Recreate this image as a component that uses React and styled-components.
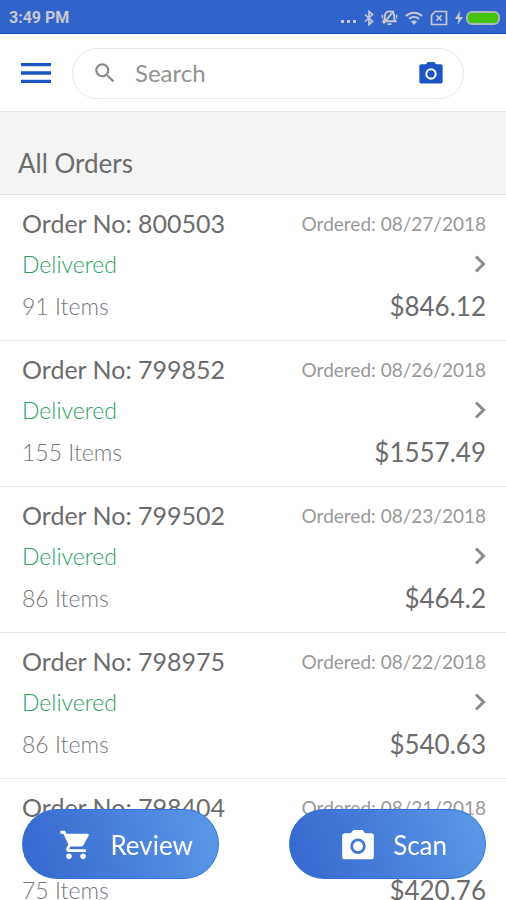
import React from 'react';
import styled, { createGlobalStyle } from 'styled-components';

const GlobalStyle = createGlobalStyle`
  *, *::before, *::after { box-sizing: border-box; }
  body { margin: 0; background: #fff; font-family: Lato, "Open Sans", sans-serif; }
  button, input { font: inherit; }
`;

const Screen = styled.div`
  display: flex;
  flex-direction: column;
  height: 100vh;
  overflow: hidden;
`;

const StatusBar = styled.div`
  flex: none;
  display: flex;
  align-items: center;
  justify-content: space-between;
  height: 34px;
  padding: 2px 6px 0 9px;
  background: #3064cb;
  border-bottom: 1px solid #0f4bb8;
  color: #c9c8d2;
`;

const Clock = styled.time`
  font: 700 16px/20px Roboto, sans-serif;
`;

const StatusIcons = styled.div`
  display: flex;
  align-items: center;
  gap: 7px;
`;

const Power = styled.div`
  display: flex;
  align-items: center;
  gap: 3px;
`;

const Header = styled.header`
  flex: none;
  display: flex;
  align-items: center;
  gap: 16px;
  height: 78px;
  padding: 1px 42px 0 16px;
  border-bottom: 1px solid #e4e4e4;
`;

const IconButton = styled.button`
  flex: none;
  display: flex;
  padding: 0;
  border: 0;
  background: none;
  color: #1d56c4;
  cursor: pointer;
`;

const SearchBox = styled.label`
  flex: 1;
  min-width: 0;
  display: flex;
  align-items: center;
  height: 51px;
  padding: 0 18px 0 19px;
  border: 1px solid #e8e8e8;
  border-radius: 26px;
  color: #8a8a8a;
`;

const SearchInput = styled.input`
  flex: 1;
  min-width: 0;
  margin-left: 17px;
  padding: 0;
  border: 0;
  outline: 0;
  background: none;
  font-size: 24px;
  line-height: 28px;
  color: #555;
  &::placeholder { color: #929292; opacity: 1; }
`;

const PageTitle = styled.h1`
  flex: none;
  margin: 0;
  padding: 35px 18px 15px;
  background: #f4f4f4;
  border-bottom: 1px solid #e4e4e4;
  font-size: 26px;
  font-weight: 400;
  line-height: 32px;
  color: #6c6c6c;
`;

const OrderList = styled.ul`
  flex: 1;
  min-height: 0;
  margin: 0;
  padding: 0 0 100px;
  list-style: none;
  overflow-y: auto;
  scrollbar-width: none;
`;

const OrderItem = styled.li`
  border-bottom: 1px solid #e8e8e8;
`;

const OrderLink = styled.a`
  display: grid;
  grid-template-columns: 1fr auto;
  grid-template-rows: 40px 41px 43px;
  align-items: center;
  padding: 8px 20px 13px 22px;
  color: #6c6c6c;
  text-decoration: none;
`;

const OrderNumber = styled.span`
  font-size: 25px;
`;

const OrderDate = styled.span`
  justify-self: end;
  font-size: 19px;
  color: #999;
`;

const Status = styled.span`
  font-size: 23px;
  font-weight: 300;
  color: #2b9f62;
`;

const ItemCount = styled.span`
  font-size: 23px;
  font-weight: 300;
  color: #777;
`;

const Total = styled.span`
  justify-self: end;
  font-size: 26px;
`;

const Chevron = styled.svg`
  justify-self: end;
  width: 12px;
  height: 18px;
  fill: none;
  stroke: #8c8c8c;
  stroke-width: 3;
`;

const Actions = styled.div`
  position: fixed;
  inset: auto 0 0;
  display: flex;
  justify-content: space-between;
  padding: 0 20px 21px 22px;
  pointer-events: none;
`;

const ActionButton = styled.button`
  display: flex;
  align-items: center;
  justify-content: flex-end;
  gap: ${({ $gap }) => $gap}px;
  width: 197px;
  height: 70px;
  padding: 2px ${({ $inset }) => $inset}px 0 0;
  border: 1px solid #2f72d8;
  border-radius: 36px;
  background: linear-gradient(70deg, #386bd0 10%, #5a97e6 95%);
  color: #fff;
  font-size: 26px;
  cursor: pointer;
  pointer-events: auto;
`;

const orders = [
  { number: '800503', date: '08/27/2018', items: 91, total: '$846.12' },
  { number: '799852', date: '08/26/2018', items: 155, total: '$1557.49' },
  { number: '799502', date: '08/23/2018', items: 86, total: '$464.2' },
  { number: '798975', date: '08/22/2018', items: 86, total: '$540.63' },
  { number: '798404', date: '08/21/2018', items: 75, total: '$420.76' },
];

const Camera = ({ size }) => (
  <svg width={size} height={size} viewBox="0 0 24 24" fill="currentColor" aria-hidden="true">
    <path fillRule="evenodd" d="M9.500 2.500C8.500 2.500 8.200 4.500 7 4.500H3.500C2.700 4.500 2 5.200 2 6v13.500c0 .8.700 1.500 1.500 1.500h17c.8 0 1.500-.7 1.500-1.500V6c0-.8-.7-1.500-1.500-1.500H17c-1.200 0-1.500-2-2.500-2h-5zM12 17.700a4.900 4.900 0 1 1 0-9.800 4.900 4.900 0 0 1 0 9.800z" />
    <circle cx="12" cy="12.800" r="3.100" />
  </svg>
);

const Cart = () => (
  <svg width="34" height="34" viewBox="0 0 24 24" fill="currentColor" aria-hidden="true">
    <path d="M7 18c-1.100 0-1.990.9-1.990 2S5.900 22 7 22s2-.9 2-2-.9-2-2-2zM1 2v2h2l3.600 7.590-1.350 2.450c-.16.28-.25.61-.25.96 0 1.100.9 2 2 2h12v-2H7.420c-.14 0-.25-.11-.25-.25l.03-.12.9-1.630h7.450c.75 0 1.410-.41 1.750-1.030l3.580-6.490A1 1 0 0 0 20 4H5.210l-.94-2H1zm16 16c-1.100 0-1.990.9-1.990 2s.89 2 1.990 2 2-.9 2-2-.9-2-2-2z" />
  </svg>
);

export default function App() {
  return (
    <>
      <GlobalStyle />
      <Screen>
        <StatusBar>
          <Clock>3:49 PM</Clock>
          <StatusIcons>
            <svg width="16" height="16" viewBox="0 0 16 16" fill="currentColor" aria-hidden="true">
              <rect x="0" y="10" width="3" height="3" />
              <rect x="6" y="10" width="3" height="3" />
              <rect x="12" y="10" width="3" height="3" />
            </svg>
            <svg width="10" height="16" viewBox="0 0 10 16" fill="none" stroke="currentColor" strokeWidth="1.700" aria-hidden="true">
              <path d="M1 4.500 8.500 11.500 5 14.500v-13l3.500 3L1 11.500" />
            </svg>
            <svg width="17" height="17" viewBox="0 0 18 18" fill="none" stroke="currentColor" strokeWidth="2" aria-hidden="true">
              <path d="M2.500 13 4 10.500V7.500C4.200 4.500 6 2.500 9 2.500s4.800 2 5 5v3l1.500 2.500zM7 16h4M2.500 15.500 13.500 2" />
              <path d="M1.500 10V6M16.500 10V6" strokeWidth="1.500" />
            </svg>
            <svg width="18" height="16" viewBox="0 0 18 16" fill="none" stroke="currentColor" strokeWidth="2" aria-hidden="true">
              <path d="M1 6c4.500-4.500 11.500-4.500 16 0M4 9c3-2.800 7-2.800 10 0" />
              <path d="M6 11.500c2-1.500 4-1.500 6 0L9 15z" fill="currentColor" stroke="none" />
            </svg>
            <svg width="18" height="16" viewBox="0 0 18 16" fill="none" stroke="currentColor" strokeWidth="1.700" aria-hidden="true">
              <path d="M5 1.500h11.500v13h-15V5.500zM6.500 5.500l5 5M11.500 5.500l-5 5" />
            </svg>
            <Power>
              <svg width="8" height="14" viewBox="0 0 8 14" fill="currentColor" aria-hidden="true">
                <path d="M5 0 0 8h3.500L2.500 14 8 6H4.500z" />
              </svg>
              <svg width="34" height="14" viewBox="0 0 34 14" aria-hidden="true">
                <rect x="1" y="1" width="32" height="12" rx="5" fill="#43c30c" stroke="#a9b6bf" strokeWidth="2" />
              </svg>
            </Power>
          </StatusIcons>
        </StatusBar>

        <Header>
          <IconButton type="button" aria-label="Menu">
            <svg width="40" height="40" viewBox="0 0 24 24" fill="currentColor" aria-hidden="true">
              <path d="M3 18h18v-2H3v2zm0-5h18v-2H3v2zm0-7v2h18V6H3z" />
            </svg>
          </IconButton>
          <SearchBox>
            <svg width="26" height="26" viewBox="0 0 24 24" fill="currentColor" aria-hidden="true">
              <path d="M15.500 14h-.79l-.28-.27A6.470 6.470 0 0 0 16 9.500 6.500 6.500 0 1 0 9.500 16c1.610 0 3.090-.59 4.230-1.570l.27.28v.79l5 4.990L20.490 19l-4.990-5zm-6 0a4.500 4.500 0 1 1 0-9 4.500 4.500 0 0 1 0 9z" />
            </svg>
            <SearchInput type="text" placeholder="Search" aria-label="Search" />
            <IconButton type="button" aria-label="Search by photo">
              <Camera size={28} />
            </IconButton>
          </SearchBox>
        </Header>

        <PageTitle>All Orders</PageTitle>

        <OrderList>
          {orders.map((order) => (
            <OrderItem key={order.number}>
              <OrderLink href={`#${order.number}`}>
                <OrderNumber>Order No: {order.number}</OrderNumber>
                <OrderDate>Ordered: {order.date}</OrderDate>
                <Status>Delivered</Status>
                <Chevron viewBox="0 0 12 18" aria-hidden="true">
                  <path d="M2 1.500 9.500 9 2 16.500" />
                </Chevron>
                <ItemCount>{order.items} Items</ItemCount>
                <Total>{order.total}</Total>
              </OrderLink>
            </OrderItem>
          ))}
        </OrderList>

        <Actions>
          <ActionButton type="button" $gap={17} $inset={25}>
            <Cart />
            Review
          </ActionButton>
          <ActionButton type="button" $gap={16} $inset={38}>
            <Camera size={38} />
            Scan
          </ActionButton>
        </Actions>
      </Screen>
    </>
  );
}
